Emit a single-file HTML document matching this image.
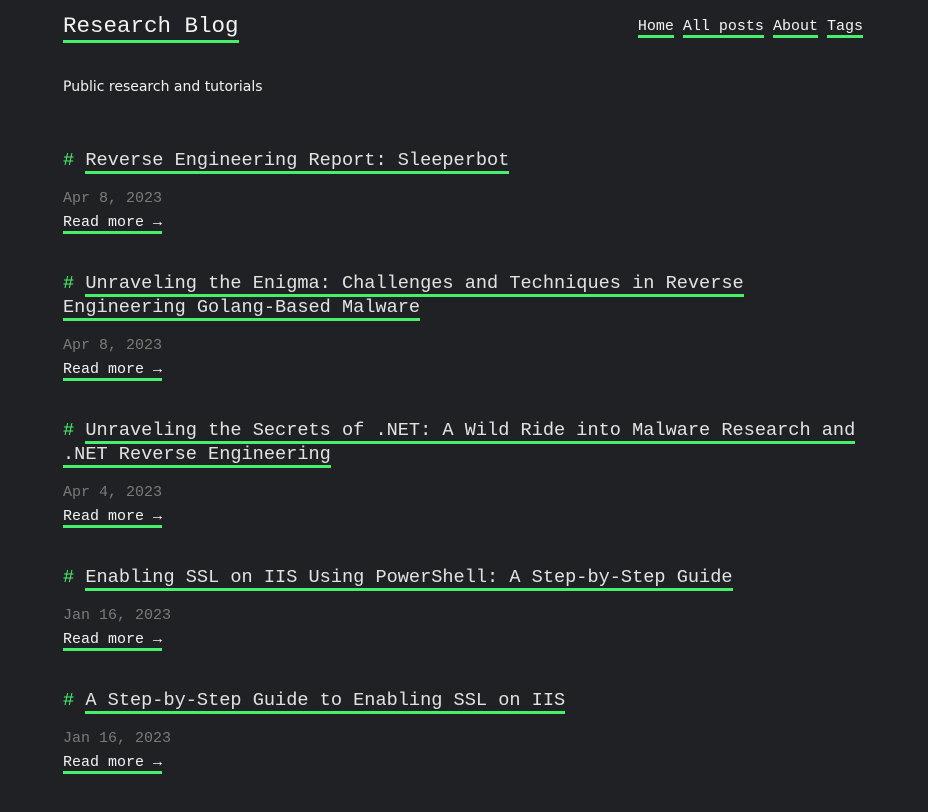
<!DOCTYPE html>
<html><head><meta charset="utf-8">
<style>
html,body{margin:0;padding:0;background:#202124;}
body{width:928px;height:732px;overflow:hidden;font-family:"Liberation Mono",monospace;color:#e6e6e6;position:relative;}
.u{border-bottom:3px solid #47f06a;text-decoration:none;color:inherit;}
.title{position:absolute;left:63px;top:11px;font-size:22.5px;line-height:30px;color:#f2f2f2;}
.title .u{padding-bottom:1px;}
.nav{position:absolute;right:65px;top:16px;font-size:15px;line-height:22px;color:#f2f2f2;white-space:pre;}
.tag{position:absolute;left:63px;top:77px;font-family:"DejaVu Sans","Liberation Sans",sans-serif;font-size:14px;line-height:20px;color:#f0f0f0;}
.posts{position:absolute;left:63px;top:149px;width:800px;}
.post{margin-bottom:37px;}
h2{margin:0;font-size:18.6px;line-height:24px;font-weight:normal;color:#e2e2e2;}
h2 .h{color:#47f06a;}
.date{margin-top:14px;font-size:15px;line-height:24px;color:#7a7a7a;}
.rm{font-size:15px;line-height:24px;color:#f2f2f2;}
</style></head><body>
<div class="title"><span class="u">Research Blog</span></div>
<div class="nav"><span class="u">Home</span> <span class="u">All posts</span> <span class="u">About</span> <span class="u">Tags</span></div>
<div class="tag">Public research and tutorials</div>
<div class="posts">
<div class="post"><h2><span class="h">#</span> <span class="u">Reverse Engineering Report: Sleeperbot</span></h2><div class="date">Apr 8, 2023</div><div class="rm"><span class="u">Read more →</span></div></div>
<div class="post"><h2><span class="h">#</span> <span class="u">Unraveling the Enigma: Challenges and Techniques in Reverse Engineering Golang-Based Malware</span></h2><div class="date">Apr 8, 2023</div><div class="rm"><span class="u">Read more →</span></div></div>
<div class="post"><h2><span class="h">#</span> <span class="u">Unraveling the Secrets of .NET: A Wild Ride into Malware Research and .NET Reverse Engineering</span></h2><div class="date">Apr 4, 2023</div><div class="rm"><span class="u">Read more →</span></div></div>
<div class="post"><h2><span class="h">#</span> <span class="u">Enabling SSL on IIS Using PowerShell: A Step-by-Step Guide</span></h2><div class="date">Jan 16, 2023</div><div class="rm"><span class="u">Read more →</span></div></div>
<div class="post"><h2><span class="h">#</span> <span class="u">A Step-by-Step Guide to Enabling SSL on IIS</span></h2><div class="date">Jan 16, 2023</div><div class="rm"><span class="u">Read more →</span></div></div>
</div>
</body></html>
